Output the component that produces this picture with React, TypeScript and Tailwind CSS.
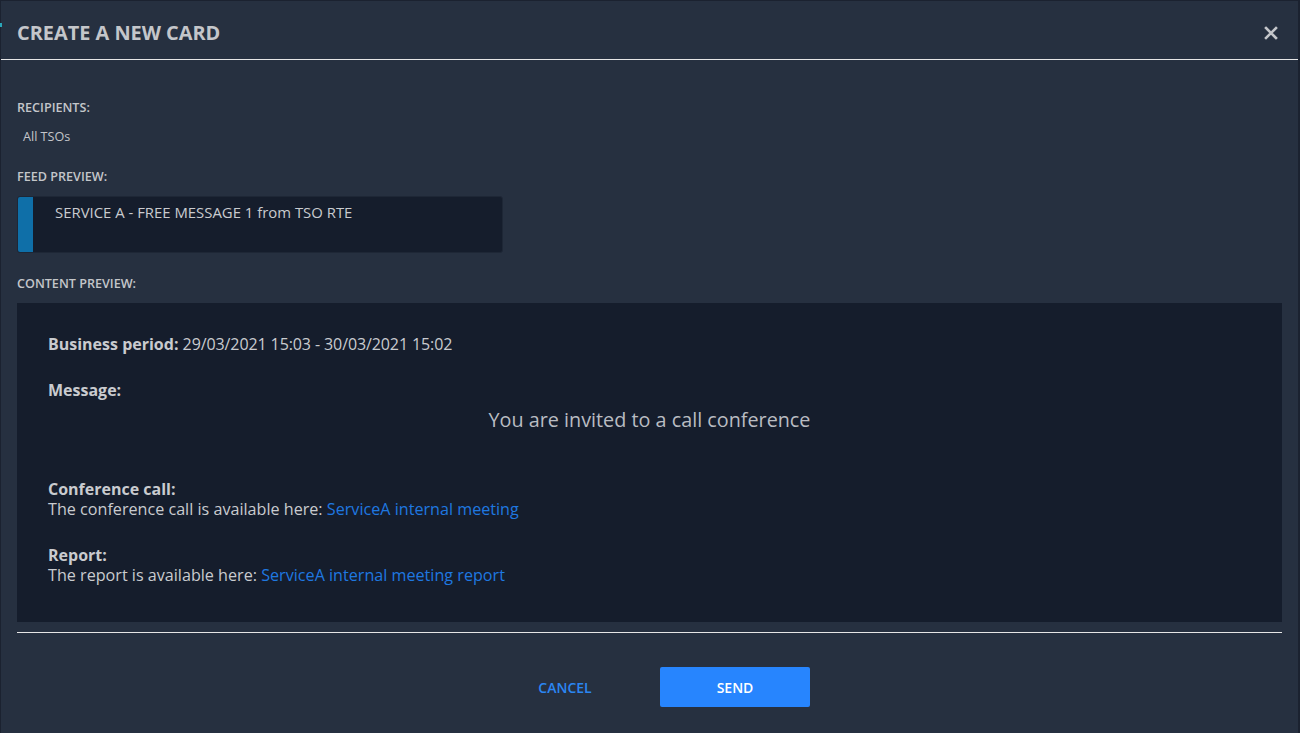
import React from "react";

export default function App() {
  return (
    <div
      className="w-[1300px] h-[733px] bg-[#1b2230] pt-px pl-px pr-[2px] overflow-hidden"
      style={{ fontFamily: '"Open Sans", "Noto Sans", sans-serif' }}
    >
      <div className="relative h-[740px] bg-[#263040] text-[#c9cbcf]">
        <div className="absolute left-[-1px] top-[22px] w-[2px] h-[4px] bg-[#2aa6b8]" />
        {/* header */}
        <div className="h-[59px] flex items-center justify-between pl-4 pr-[20px] border-b border-[#e6e6e6]">
          <h1 className="text-[19.9px] font-bold text-[#c4c6ca] uppercase pt-[6px]">
            Create a new card
          </h1>
          <svg width="14" height="14" viewBox="0 0 14 14" className="mt-[6px]">
            <path d="M2 2 L12 12 M12 2 L2 12" stroke="#c4c6ca" strokeWidth="2.6" strokeLinecap="square" />
          </svg>
        </div>

        <div className="px-4">
          <div className="pt-[39px] text-[12.6px] font-semibold text-[#c4c6ca] leading-[17px]">RECIPIENTS:</div>
          <div className="pt-[12px] pl-[6px] text-[12.6px] leading-[17px] text-[#c4c6ca]">All TSOs</div>

          <div className="pt-[23px] text-[12.6px] font-semibold text-[#c4c6ca] leading-[17px]">FEED PREVIEW:</div>
          <div className="mt-[11px] w-[486px] h-[57px] bg-[#151d2c] rounded-[3px] flex overflow-hidden border border-[#1e2736]">
            <div className="w-[15px] bg-[#0f6fa8]" />
            <div className="pl-[22px] pt-[5px] text-[14.9px] text-[#c9cbcf] leading-[20px]">
              SERVICE A - FREE MESSAGE 1 from TSO RTE
            </div>
          </div>

          <div className="pt-[22px] text-[12.6px] font-semibold text-[#c4c6ca] leading-[17px]">CONTENT PREVIEW:</div>
          <div className="mt-[11px] h-[319px] bg-[#151d2c] pl-[31px] pr-[31px] pt-[31px] text-[16px] leading-[20px] text-[#c9cbcf]">
            <div>
              <span className="font-bold">Business period:</span>{" "}
              <span className="tracking-[-0.1px]">29/03/2021 15:03 - 30/03/2021 15:02</span>
            </div>
            <div className="pt-[26px] font-bold">Message:</div>
            <div className="pt-[9px] text-center text-[19.8px] leading-[22px] text-[#b9bcc2]">
              You are invited to a call conference
            </div>
            <div className="pt-[48px] font-bold">Conference call:</div>
            <div className="text-[16.15px]">
              The conference call is available here:{" "}
              <a className="text-[#1f78e0]">ServiceA internal meeting</a>
            </div>
            <div className="pt-[26px] font-bold">Report:</div>
            <div className="text-[16.15px]">
              The report is available here:{" "}
              <a className="text-[#1f78e0]">ServiceA internal meeting report</a>
            </div>
          </div>
          <div className="mt-[10px] border-t border-[#e6e6e6]" />

          <div className="pt-[34px] flex justify-center items-center gap-[45px] pl-[26px]">
            <button className="w-[100px] text-[14px] font-semibold text-[#2b86f2]">CANCEL</button>
            <button className="w-[150px] h-[40px] rounded-[2px] bg-[#2785fe] text-white text-[14px] font-semibold">
              SEND
            </button>
          </div>
        </div>
      </div>
    </div>
  );
}
